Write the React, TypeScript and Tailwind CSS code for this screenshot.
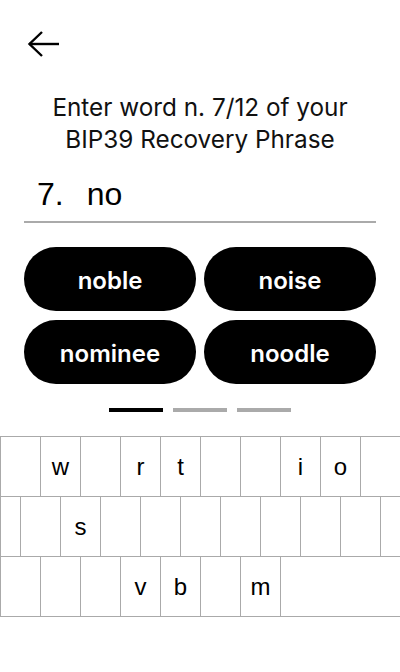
import React from "react";

const row1 = ["", "w", "", "r", "t", "", "", "i", "o", ""];
const row2 = ["", "s", "", "", "", "", "", "", ""];
const row3 = ["", "", "", "v", "b", "", "m"];

function Key({ label, w = "w-10" }: { label: string; w?: string }) {
  return (
    <div
      className={`${w} h-full shrink-0 border-l border-[#aaaaaa] flex items-center justify-center text-[24px] text-black font-['Liberation_Sans',Arial,sans-serif]`}
    >
      {label}
    </div>
  );
}

export default function App() {
  const words = ["noble", "noise", "nominee", "noodle"];
  return (
    <div className="w-[400px] h-[672px] bg-white overflow-hidden flex flex-col">
      <div className="px-6 pt-6">
        <svg width="40" height="40" viewBox="0 0 40 40" fill="none" stroke="black" strokeWidth="2.4" strokeLinecap="butt" strokeLinejoin="miter">
          <path d="M5 20 H35" />
          <path d="M18 8 L5.5 20 L18 32" />
        </svg>
      </div>
      <div className="mt-[27px] text-center text-[24.3px] leading-[32px] text-[#111] font-[Inter,sans-serif]">
        <div>Enter word n. 7/12 of your</div>
        <div>BIP39 Recovery Phrase</div>
      </div>
      <div className="mx-6 mt-[21px] pb-[9px] border-b-2 border-[#aaaaaa] flex items-center h-[47px]">
        <div className="flex text-[32px] leading-[36px] text-black pl-[13px] font-['Liberation_Sans',Arial,sans-serif]">
          <span>7.</span>
          <span className="ml-[23px]">no</span>
        </div>
      </div>
      <div className="mx-6 mt-6 grid grid-cols-2 gap-x-2 gap-y-[9px]">
        {words.map((w) => (
          <div
            key={w}
            className="h-16 pt-[3px] rounded-full bg-black text-white flex items-center justify-center text-[24px] font-semibold font-[Inter,sans-serif]"
          >
            {w}
          </div>
        ))}
      </div>
      <div className="mt-6 flex justify-center gap-[10px]">
        <div className="w-[54px] h-1 bg-black" />
        <div className="w-[54px] h-1 bg-[#aaaaaa]" />
        <div className="w-[54px] h-1 bg-[#aaaaaa]" />
      </div>
      <div className="mt-6 border-t border-[#aaaaaa] overflow-hidden">
        <div className="flex h-[60px] border-b border-[#aaaaaa]">
          {row1.map((l, i) => (
            <Key key={i} label={l} />
          ))}
        </div>
        <div className="flex h-[60px] border-b border-[#aaaaaa]">
          <Key label="" w="w-5" />
          {row2.map((l, i) => (
            <Key key={i} label={l} />
          ))}
          <Key label="" w="w-5" />
        </div>
        <div className="flex h-[60px] border-b border-[#aaaaaa]">
          {row3.map((l, i) => (
            <Key key={i} label={l} />
          ))}
          <Key label="" w="w-[120px]" />
        </div>
      </div>
    </div>
  );
}
